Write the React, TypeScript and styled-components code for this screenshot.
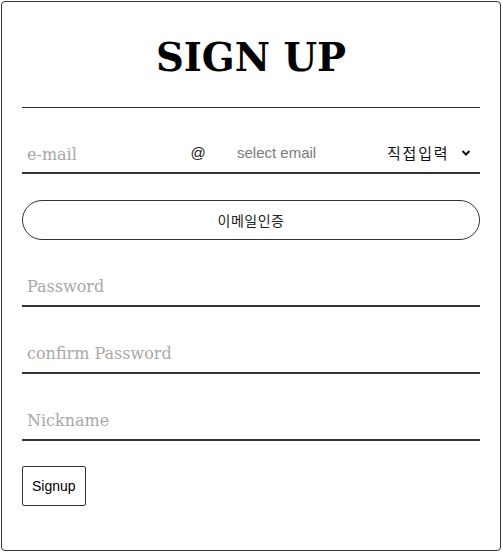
import React from "react";
import styled, { createGlobalStyle } from "styled-components";

const Global = createGlobalStyle`
  html, body { margin: 0; padding: 0; background: #fff; }
  body { font-family: "Liberation Sans", Arial, sans-serif; }
  * { box-sizing: border-box; }
`;

const Card = styled.div`
  margin: 1px;
  width: 500px;
  height: 550px;
  border: 1px solid #333;
  border-radius: 4px;
  padding: 36px 20px 0;
  display: flex;
  flex-direction: column;
`;

const Title = styled.h1`
  margin: 0;
  height: 40px;
  line-height: 40px;
  font-family: "DejaVu Serif", serif;
  font-weight: bold;
  font-size: 38.6px;
  text-align: center;
  color: #000;
`;

const Divider = styled.hr`
  margin: 29px 0 0;
  border: 0;
  height: 1px;
  background: #333;
`;

const EmailRow = styled.div`
  margin-top: 29px;
  height: 37px;
  padding-bottom: 4px;
  display: flex;
  align-items: center;
  border-bottom: 2px solid #333;
`;

const SerifInput = styled.input`
  min-width: 0;
  border: 0;
  outline: none;
  background: transparent;
  padding: 0 5px;
  font-family: "DejaVu Serif", serif;
  font-size: 16px;
  color: #333;
  &::placeholder { color: #a8a8a8; }
`;

const EmailInput = styled(SerifInput)`
  width: 160px;
  flex: 0 0 160px;
  height: 31px;
  padding-top: 3px;
`;

const At = styled.span`
  flex: 0 0 32px;
  text-align: center;
  font-size: 15px;
  color: #222;
`;

const DomainInput = styled.input`
  min-width: 0;
  width: 150px;
  flex: 0 0 150px;
  margin-left: 18px;
  height: 31px;
  border: 0;
  outline: none;
  padding: 0 5px;
  font-family: "Liberation Sans", Arial, sans-serif;
  font-size: 15px;
  &::placeholder { color: #7a7a7a; }
`;

const SelectWrap = styled.label`
  flex: 1;
  min-width: 0;
  display: flex;
  align-items: center;
  padding: 0 9px 0 5px;
  justify-content: space-between;
  height: 31px;
`;

const Select = styled.select`
  appearance: none;
  width: 64px;
  flex: 0 0 64px;
  border: 0;
  outline: none;
  background: transparent;
  padding: 0;
  font-family: "Noto Sans CJK KR", sans-serif;
  font-size: 15px;
  letter-spacing: 1.8px;
  color: #111;
`;

const ChevronIcon = styled.svg`
  flex: 0 0 10px;
  display: block;
`;

const PillButton = styled.button`
  margin-top: 26px;
  height: 40px;
  border: 1px solid #333;
  border-radius: 20px;
  background: #fff;
  font-family: "Noto Sans CJK KR", sans-serif;
  font-size: 14px;
  color: #222;
  letter-spacing: 0.5px;
`;

const Field = styled(SerifInput)<{ $gap: number }>`
  margin-top: ${(p) => p.$gap}px;
  height: 37px;
  border-bottom: 2px solid #333;
  padding-bottom: 2px;
`;

const SubmitButton = styled.button`
  margin-top: 25px;
  align-self: flex-start;
  height: 40px;
  padding: 0 9px;
  border: 1px solid #333;
  border-radius: 2px;
  background: #fff;
  font-family: "Liberation Sans", Arial, sans-serif;
  font-size: 14px;
  color: #000;
`;

const Chevron = () => (
  <ChevronIcon width="10" height="8" viewBox="0 0 10 8" aria-hidden="true">
    <path d="M1.5 2 L5 5.5 L8.5 2" fill="none" stroke="#111" strokeWidth="2" />
  </ChevronIcon>
);

export default function App() {
  return (
    <>
      <Global />
      <Card>
        <Title>SIGN UP</Title>
        <Divider />
        <EmailRow>
          <EmailInput placeholder="e-mail" />
          <At>@</At>
          <DomainInput placeholder="select email" />
          <SelectWrap>
            <Select defaultValue="direct">
              <option value="direct">직접입력</option>
              <option value="naver">naver.com</option>
              <option value="gmail">gmail.com</option>
            </Select>
            <Chevron />
          </SelectWrap>
        </EmailRow>
        <PillButton>이메일인증</PillButton>
        <Field $gap={30} type="password" placeholder="Password" />
        <Field $gap={30} type="password" placeholder="confirm Password" />
        <Field $gap={30} placeholder="Nickname" />
        <SubmitButton>Signup</SubmitButton>
      </Card>
    </>
  );
}
